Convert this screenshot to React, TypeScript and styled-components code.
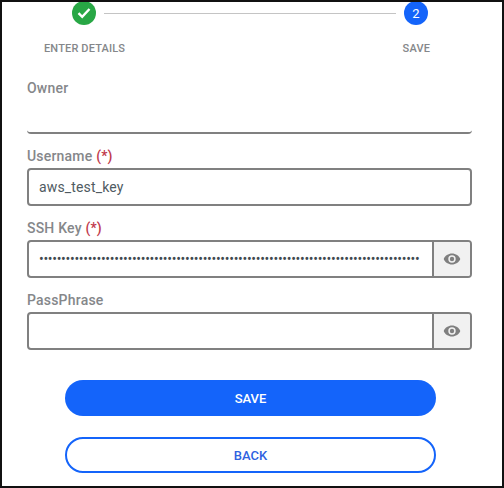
import React from 'react';
import styled, { createGlobalStyle } from 'styled-components';

const GlobalStyle = createGlobalStyle`
  html, body {
    margin: 0;
    padding: 0;
    background: #fff;
  }
  * {
    box-sizing: border-box;
  }
`;

const BORDER = '#808080';
const BLUE = '#1464fa';

const EyeIcon: React.FC = () => (
  <svg width="18" height="14" viewBox="0 0 18 14" aria-hidden="true">
    <path
      fill="#7f7f7f"
      fillRule="evenodd"
      d="M9 1.5C5.2 1.5 2 3.8.7 7 2 10.2 5.2 12.5 9 12.5s7-2.3 8.3-5.5C16 3.800 12.800 1.500 9 1.500ZM9 3.300a3.700 3.700 0 1 1 0 7.400 3.700 3.700 0 0 1 0-7.400Z"
    />
    <circle cx="9" cy="7" r="2.200" fill="#7f7f7f" />
  </svg>
);

const App: React.FC = () => (
  <>
    <GlobalStyle />
    <Frame>
      <Track>
        <DoneCircle>
          <svg width="14" height="12" viewBox="0 0 14 12" aria-hidden="true">
            <path d="M1.500 6.200 5.200 9.800 12.500 2" fill="none" stroke="#fff" strokeWidth="2.400" />
          </svg>
        </DoneCircle>
        <Connector />
        <ActiveCircle>2</ActiveCircle>
      </Track>
      <StepLabels>
        <span>ENTER DETAILS</span>
        <span>SAVE</span>
      </StepLabels>

      <Form>
        <Field>
          <Label>Owner</Label>
          <OwnerValue />
        </Field>
        <Field>
          <Label>
            Username <Required>(*)</Required>
          </Label>
          <InputBox>
            <Value>aws_test_key</Value>
          </InputBox>
        </Field>
        <Field>
          <Label>
            SSH Key <Required>(*)</Required>
          </Label>
          <InputBox>
            <Dots>{'•'.repeat(86)}</Dots>
            <Addon>
              <EyeIcon />
            </Addon>
          </InputBox>
        </Field>
        <Field>
          <Label>PassPhrase</Label>
          <InputBox>
            <Value />
            <Addon>
              <EyeIcon />
            </Addon>
          </InputBox>
        </Field>
      </Form>

      <Actions>
        <SaveButton type="button">SAVE</SaveButton>
        <BackButton type="button">BACK</BackButton>
      </Actions>
    </Frame>
  </>
);

export default App;

const Frame = styled.div`
  width: 504px;
  height: 488px;
  border: 2px solid #111;
  background: #fff;
  overflow: hidden;
  font-family: Roboto, 'Liberation Sans', sans-serif;
`;

const Track = styled.div`
  display: flex;
  align-items: center;
  margin-top: -1px;
  padding: 0 74px 0 70px;
`;

const Circle = styled.div`
  display: flex;
  flex: none;
  align-items: center;
  justify-content: center;
  width: 24px;
  height: 24px;
  border-radius: 50%;
  color: #fff;
  font-size: 13px;
`;

const DoneCircle = styled(Circle)`
  background: #28a745;
`;

const ActiveCircle = styled(Circle)`
  background: ${BLUE};
`;

const Connector = styled.div`
  flex: 1;
  height: 1px;
  margin: 0 8px;
  background: #c4c4c4;
`;

const StepLabels = styled.div`
  display: flex;
  justify-content: space-between;
  margin-top: 17px;
  padding: 0 72px 0 42px;
  color: #85878a;
  font-size: 11px;
  font-weight: 500;
  line-height: 14px;
  letter-spacing: 0.15px;
`;

const Form = styled.div`
  display: flex;
  flex-direction: column;
  gap: 13px;
  margin-top: 23px;
  padding: 0 30px 0 25px;
`;

const Field = styled.div`
  display: flex;
  flex-direction: column;
  gap: 3px;
`;

const Label = styled.label`
  color: #85878a;
  font-size: 14px;
  font-weight: 500;
  line-height: 18px;
  letter-spacing: 0.2px;
`;

const Required = styled.span`
  color: #c0394b;
`;

const OwnerValue = styled.div`
  height: 34px;
  border-bottom: 2px solid ${BORDER};
  border-radius: 0 0 4px 4px;
`;

const InputBox = styled.div`
  display: flex;
  height: 38px;
  overflow: hidden;
  border: 2px solid ${BORDER};
  border-radius: 4px;
`;

const Value = styled.div`
  flex: 1;
  padding-left: 10px;
  color: #4f5b62;
  font-size: 14px;
  line-height: 34px;
  letter-spacing: 0.15px;
`;

const Dots = styled.div`
  flex: 1;
  overflow: hidden;
  padding-left: 10px;
  color: #3f4a50;
  font-size: 14px;
  line-height: 34px;
  letter-spacing: -0.300px;
  white-space: nowrap;
`;

const Addon = styled.div`
  display: flex;
  flex: none;
  align-items: center;
  justify-content: center;
  width: 38px;
  border-left: 2px solid ${BORDER};
  background: #f1f1f1;
`;

const Actions = styled.div`
  display: flex;
  flex-direction: column;
  gap: 21px;
  margin-top: 30px;
  padding: 0 66px 0 63px;
`;

const Pill = styled.button`
  height: 36px;
  border-radius: 18px;
  font-family: inherit;
  font-size: 13px;
  font-weight: 500;
`;

const SaveButton = styled(Pill)`
  border: none;
  background: ${BLUE};
  color: #fff;
`;

const BackButton = styled(Pill)`
  border: 2px solid ${BLUE};
  background: #fff;
  color: #2f62e0;
`;
